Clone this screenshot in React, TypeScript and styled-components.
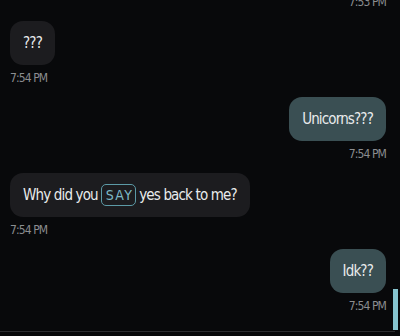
import React from "react";
import styled, { createGlobalStyle } from "styled-components";

const Global = createGlobalStyle`
  html, body { margin: 0; padding: 0; background: #08090b; }
  body { font-family: "DejaVu Sans Condensed", "DejaVu Sans", sans-serif; font-stretch: condensed; }
`;

const Screen = styled.div`
  position: relative;
  width: 400px;
  height: 336px;
  background: #08090b;
  display: flex;
  flex-direction: column;
  overflow: hidden;
`;

const List = styled.div`
  height: 331px;
  display: flex;
  flex-direction: column;
  justify-content: flex-end;
  overflow: hidden;
  padding: 0 14px 18px 10px;
  box-sizing: border-box;
`;

const Group = styled.div<{ $out?: boolean }>`
  display: flex;
  flex-direction: column;
  align-items: ${(p) => (p.$out ? "flex-end" : "flex-start")};
  margin-top: 12px;
  flex-shrink: 0;
`;

const Bubble = styled.div<{ $out?: boolean }>`
  background: ${(p) => (p.$out ? "#3a4f53" : "#1c1c1f")};
  color: #e9ebec;
  border-radius: 13px;
  padding: 12px 13px 12px 13px;
  height: 44px;
  box-sizing: border-box;
  font-size: 15px;
  letter-spacing: -0.85px;
  line-height: 20px;
  display: flex;
  align-items: center;
  gap: 3px;
  white-space: nowrap;
`;

const Tag = styled.span`
  border: 1px solid #5c9aa6;
  border-radius: 5px;
  color: #7cb9c6;
  letter-spacing: 1.3px;
  padding: 0 2px 0 4px;
  line-height: 20px;
  font-size: 14px;
`;

const Time = styled.div`
  color: #8b8d90;
  font-size: 12px;
  letter-spacing: -0.9px;
  line-height: 14px;
  margin-top: 6px;
`;

const Divider = styled.div`
  height: 1px;
  background: #2c2d30;
  margin-right: 5px;
`;

const Thumb = styled.div`
  position: absolute;
  right: 2px;
  top: 289px;
  width: 5px;
  height: 41px;
  background: #86c4cf;
`;

export default function App() {
  return (
    <>
      <Global />
      <Screen>
        <List>
          <Group $out>
            <Bubble $out>hello</Bubble>
            <Time>7:53 PM</Time>
          </Group>
          <Group>
            <Bubble>???</Bubble>
            <Time>7:54 PM</Time>
          </Group>
          <Group $out>
            <Bubble $out>Unicorns???</Bubble>
            <Time>7:54 PM</Time>
          </Group>
          <Group>
            <Bubble>
              Why did you <Tag>SAY</Tag> yes back to me?
            </Bubble>
            <Time>7:54 PM</Time>
          </Group>
          <Group $out>
            <Bubble $out>Idk??</Bubble>
            <Time>7:54 PM</Time>
          </Group>
        </List>
        <Divider />
        <Thumb />
      </Screen>
    </>
  );
}
